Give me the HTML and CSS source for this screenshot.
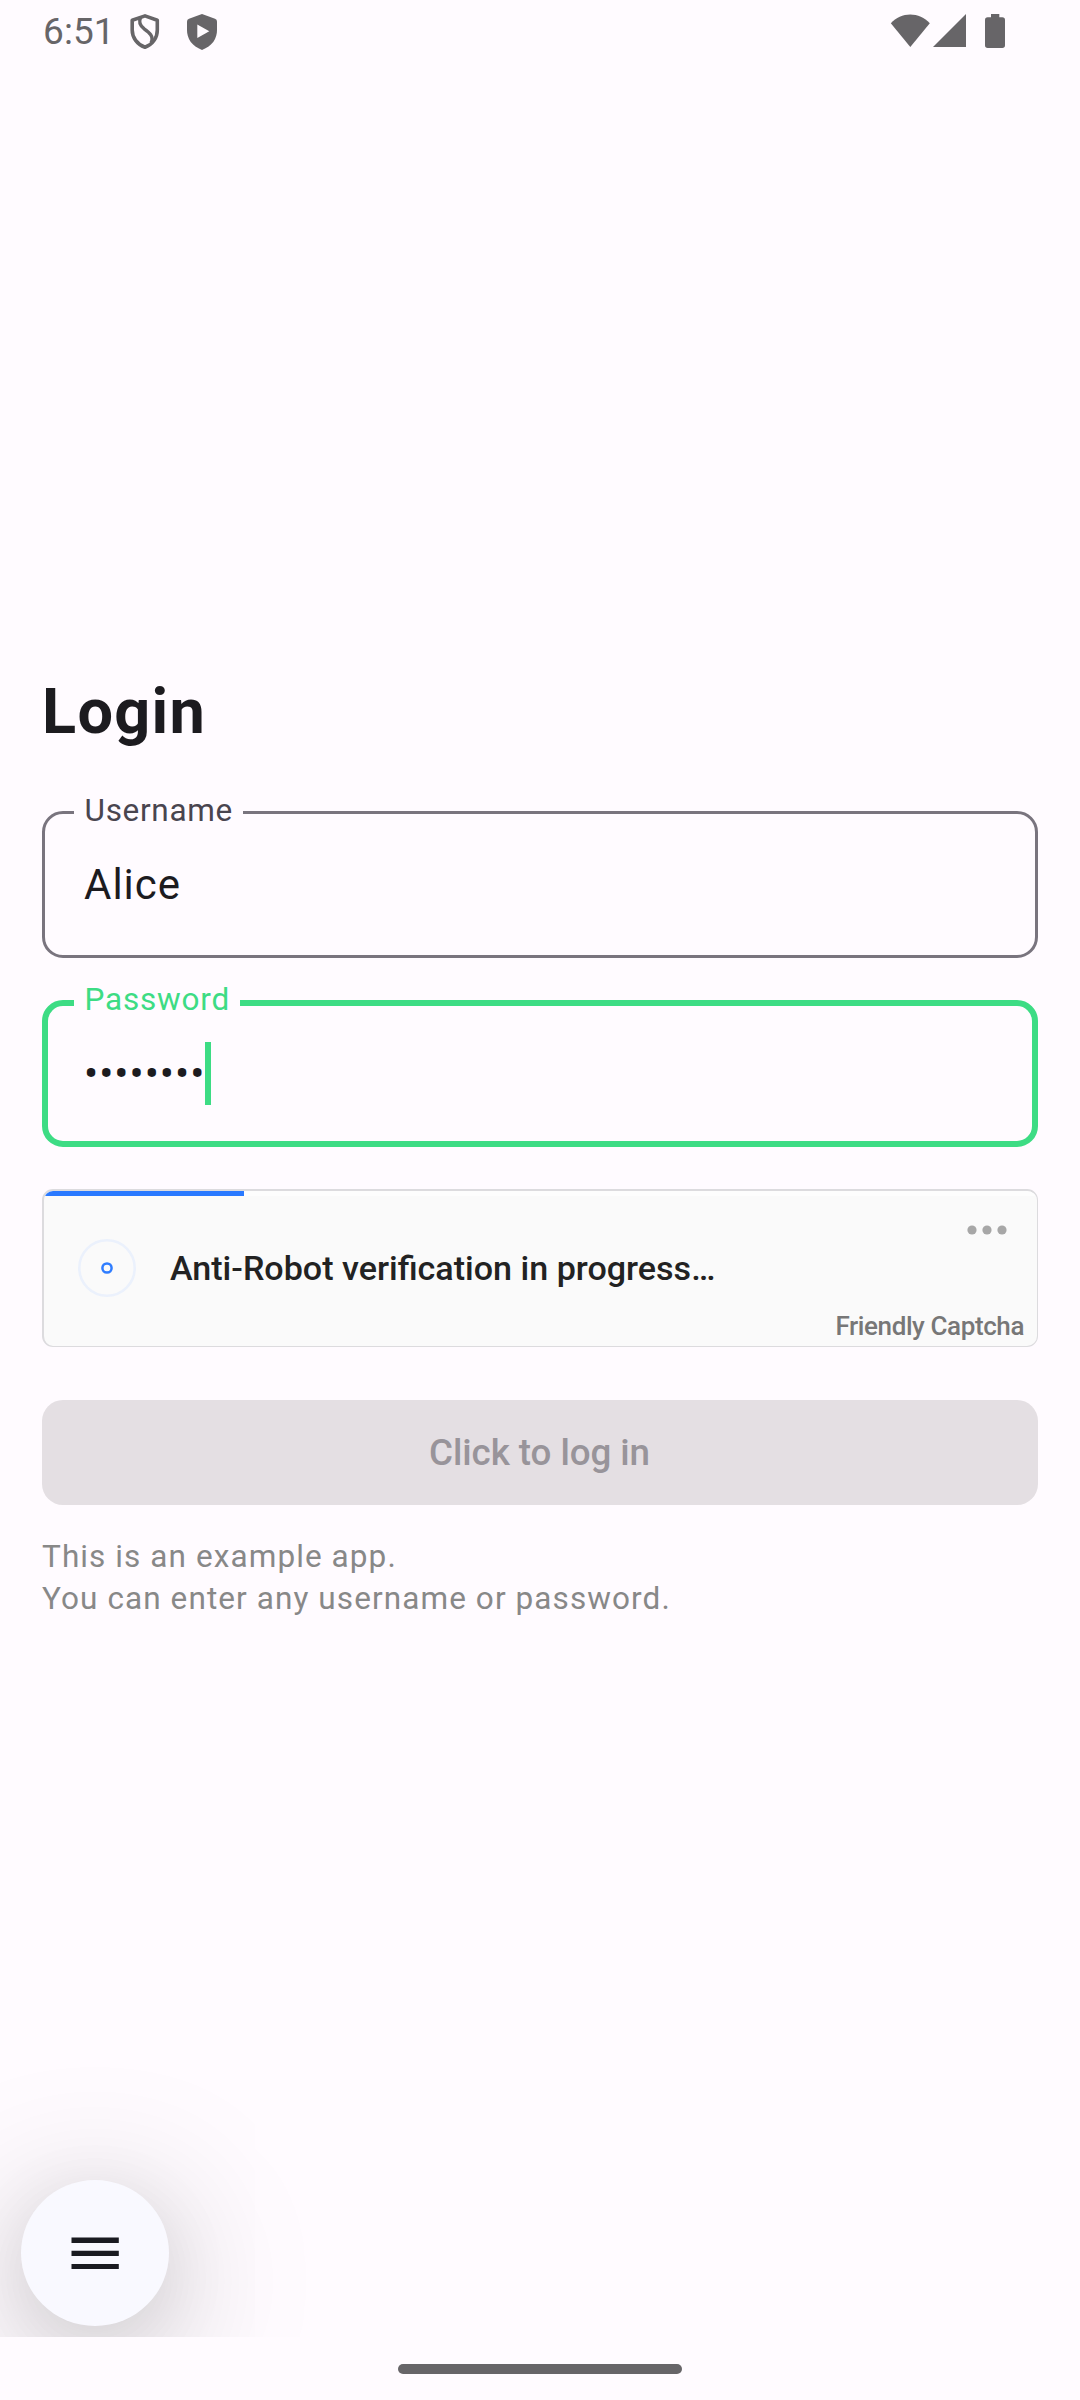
FILE: index.html
```html
<!DOCTYPE html>
<html lang="en">
<head>
<meta charset="utf-8">
<title>Login</title>
<link rel="stylesheet" href="styles.css">
</head>
<body>
<div class="screen">
  <header class="status">
    <div class="status-left">
      <span class="clock">6:51</span>
      <svg class="shield" width="30" height="36" viewBox="0 0 30 36">
        <path d="M15 1.900 27.300 6.200V16c0 7.500-4.300 14.300-12.300 17.300C7 30.300 2.200 23.500 2.200 16V6.200Z" fill="none" stroke="#676568" stroke-width="3.600" stroke-linejoin="round"/>
        <path d="M10.500 3.500C8.600 8 10.500 12 14 14.700c5 3.600 10.500 7.500 7 14.300" fill="none" stroke="#676568" stroke-width="3.400"/>
      </svg>
      <svg class="shield shield-play" width="30" height="36" viewBox="0 0 30 36">
        <path d="M15 0 28 4.800Q30 5.600 30 7.500V16c0 9-5 16-15 20C5 32 0 25 0 16V7.500Q0 5.600 2 4.800Z" fill="#676568"/>
        <path d="M10.300 10.500v13.500l12-6.750Z" fill="#fffbff"/>
      </svg>
    </div>
    <svg width="116" height="36" viewBox="0 0 116 36">
      <path d="M.8 9.200C11-2.400 29.500-2.400 39.800 9.200L20.300 33Z" fill="#676568"/>
      <path d="M76 0v33H43Z" fill="#676568"/>
      <path d="M101 0h8.300v3.300h3q2.700 0 2.700 2.700v25.300q0 2.700-2.700 2.700H97.700Q95 34 95 31.300V6q0-2.700 2.700-2.700H101Z" fill="#676568"/>
    </svg>
  </header>

  <main class="form">
    <h1 class="title">Login</h1>
    <div class="field">
      <label class="label">Username</label>
      <span class="value">Alice</span>
    </div>
    <div class="field focused">
      <label class="label">Password</label>
      <span class="value">••••••••</span>
      <span class="caret"></span>
    </div>
    <section class="captcha">
      <div class="track"><div class="progress"></div></div>
      <div class="captcha-body">
        <svg class="spinner" width="58" height="58" viewBox="0 0 58 58">
          <circle cx="29" cy="29" r="27.700" fill="none" stroke="#ebf1fc" stroke-width="2.600"/>
          <circle cx="29" cy="29" r="4.600" fill="none" stroke="#2f7dff" stroke-width="2.500"/>
        </svg>
        <span class="captcha-text">Anti-Robot verification in progress…</span>
        <div class="captcha-side">
          <svg class="dots" width="40" height="10" viewBox="0 0 40 10" fill="#a7a7a7">
            <circle cx="5" cy="5" r="4.600"/><circle cx="20" cy="5" r="4.600"/><circle cx="35" cy="5" r="4.600"/>
          </svg>
          <span class="brand">Friendly Captcha</span>
        </div>
      </div>
    </section>
    <button class="submit" disabled>Click to log in</button>
    <p class="note">This is an example app.<br>You can enter any username or password.</p>
    <div class="fab">
      <svg width="48" height="34" viewBox="0 0 48 34" fill="#1a1b21">
        <path d="M.5 .6H47.800V5.900H.5ZM.5 13.700H47.800V19H.5ZM.5 26.900H47.800V32.100H.5Z"/>
      </svg>
    </div>
  </main>

  <footer class="nav"><span class="pill"></span></footer>
</div>
</body>
</html>
```
FILE: styles.css
```css
body {
  margin: 0;
  background: #fffbff;
  font-family: Roboto, sans-serif;
  color: #1c1b1f;
}

.screen {
  width: 1080px;
  height: 2400px;
  display: flex;
  flex-direction: column;
  overflow: hidden;
}

.status {
  height: 64px;
  box-sizing: border-box;
  padding: 14px 74px 0 43px;
  display: flex;
  justify-content: space-between;
  align-items: flex-start;
}

.status-left {
  display: flex;
  align-items: flex-start;
}

.clock {
  width: 87px;
  margin-top: -4px;
  font-size: 37px;
  line-height: 44px;
  letter-spacing: .1px;
  color: #676568;
}

.shield-play {
  margin-left: 27px;
}

.form {
  position: relative;
  height: 2273px;
  box-sizing: border-box;
  padding: 606px 42px 0;
  overflow: hidden;
  display: flex;
  flex-direction: column;
}

.title {
  margin: 0 0 57px;
  font-size: 63px;
  line-height: 84px;
  font-weight: 700;
  letter-spacing: 1.3px;
}

.field {
  position: relative;
  height: 147px;
  box-sizing: border-box;
  border: 3px solid #79747e;
  border-radius: 21px;
  padding-left: 39px;
  display: flex;
  align-items: center;
  margin-bottom: 42px;
}

.label {
  position: absolute;
  left: 29px;
  top: -24px;
  padding: 0 10px 0 10.5px;
  background: #fffbff;
  font-size: 31.5px;
  line-height: 42px;
  letter-spacing: .7px;
  color: #49454f;
}

.value {
  font-size: 42px;
  line-height: 63px;
  letter-spacing: 1px;
}

.focused {
  border: 6px solid #3ddc84;
  padding-left: 36px;
}

.focused .label {
  left: 26px;
  top: -27px;
  letter-spacing: .8px;
  color: #3ddc84;
}

.caret {
  width: 5.5px;
  height: 63px;
  background: #3ddc84;
}

.captcha {
  height: 158px;
  box-sizing: border-box;
  border: solid #dcdbde;
  border-width: 2px 1px 1px 2px;
  border-radius: 11px;
  background: #fafafa;
  overflow: hidden;
  display: flex;
  flex-direction: column;
}

.track {
  height: 5px;
  background: #fdfdfd;
}

.progress {
  width: 200px;
  height: 5px;
  background: #2979ff;
}

.captcha-body {
  flex: 1;
  display: flex;
  align-items: center;
  padding-left: 34px;
}

.spinner,
.captcha-text {
  margin-bottom: 6px;
}

.captcha-text {
  margin-left: 34px;
  font-size: 34.100px;
  line-height: 40px;
  font-weight: 500;
  color: #222;
  white-space: nowrap;
}

.captcha-side {
  flex: 1;
  align-self: stretch;
  display: flex;
  flex-direction: column;
  align-items: flex-end;
  justify-content: space-between;
  padding: 29px 13px 4px 0;
}

.dots {
  margin-right: 17px;
}

.brand {
  font-size: 26px;
  line-height: 32px;
  font-weight: 500;
  letter-spacing: -.4px;
  color: #777;
}

.submit {
  margin: 53px 0 0;
  padding: 0 1px 0 0;
  height: 105px;
  flex: none;
  border: 0;
  border-radius: 21px;
  background: #e4dfe3;
  color: #98949a;
  font-family: inherit;
  font-size: 36.75px;
  font-weight: 500;
  letter-spacing: -.07px;
}

.note {
  margin: 31px 0 0;
  font-size: 31.5px;
  line-height: 42px;
  letter-spacing: 1.09px;
  color: #888;
}

.fab {
  position: absolute;
  left: 21px;
  bottom: 11px;
  width: 148px;
  height: 146px;
  border-radius: 50%;
  background: #f9f9ff;
  box-shadow: 0 28px 152px rgba(0, 0, 0, .25), 0 16px 70px rgba(0, 0, 0, .08);
  display: flex;
  align-items: center;
  justify-content: center;
}

.fab svg {
  margin-top: 2px;
}

.nav {
  height: 63px;
  display: flex;
  align-items: center;
  justify-content: center;
}

.pill {
  width: 284px;
  height: 10px;
  border-radius: 5px;
  background: #676568;
}
```
